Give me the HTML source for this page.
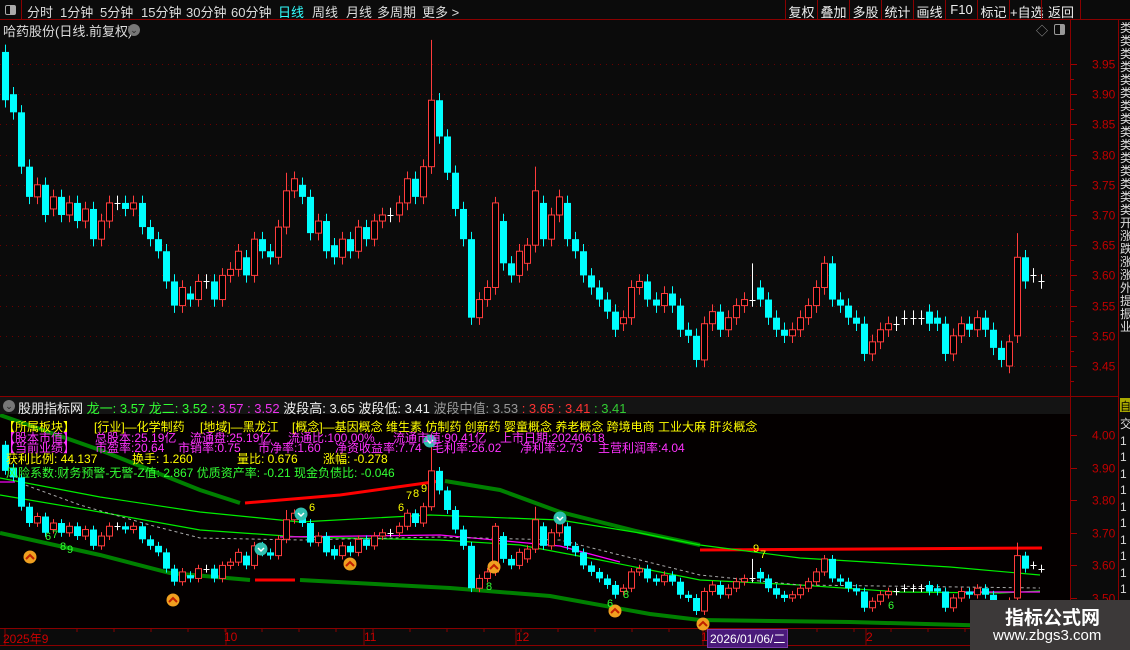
<!DOCTYPE html>
<html><head><meta charset="utf-8"><style>
*{margin:0;padding:0;box-sizing:border-box}
body{width:1130px;height:650px;background:#0b0b0b;overflow:hidden;position:relative;font-family:"Liberation Sans","Noto Sans CJK SC",sans-serif;color:#ddd}
.abs{position:absolute;white-space:nowrap}
.tb{top:0;left:0;width:1130px;height:20px;border-bottom:1px solid #8a0000;font-size:13px}
.tb span{position:absolute;top:2px}
.btn{position:absolute;top:0;height:20px;border-left:1px solid #8a0000;font-size:13px;padding:2px 0;text-align:center;color:#eee}
.row{position:absolute;height:13px;font-size:12px;line-height:13px}
.row span{position:absolute;top:0;white-space:nowrap}
</style></head><body>
<div class="abs tb">
<div class="abs" style="left:0;top:0;width:22px;height:20px;border-right:1px solid #8a0000"><div class="abs" style="left:5px;top:5px;width:11px;height:10px;border:1px solid #aaa;border-radius:2px"><div class="abs" style="right:0;top:0;width:5px;height:8px;background:#aaa"></div></div></div>
<span style="left:27px">分时</span><span style="left:60px">1分钟</span><span style="left:100px">5分钟</span><span style="left:141px">15分钟</span><span style="left:186px">30分钟</span><span style="left:231px">60分钟</span><span style="left:278px;color:#3ff">日线</span><span style="left:312px">周线</span><span style="left:346px">月线</span><span style="left:377px">多周期</span><span style="left:422px">更多 &gt;</span>
<div class="btn" style="left:785px;width:32px">复权</div><div class="btn" style="left:817px;width:32px">叠加</div><div class="btn" style="left:849px;width:32px">多股</div><div class="btn" style="left:881px;width:32px">统计</div><div class="btn" style="left:913px;width:32px">画线</div><div class="btn" style="left:945px;width:32px">F10</div><div class="btn" style="left:977px;width:32px">标记</div><div class="btn" style="left:1009px;width:32px">+自选</div><div class="btn" style="left:1041px;width:40px;border-right:1px solid #8a0000">返回</div>
</div>
<div class="abs" style="left:3px;top:21px;font-size:13px;color:#ddd">哈药股份(日线.前复权)</div>
<div class="abs" style="left:128px;top:24px;width:12px;height:12px;border-radius:6px;background:#777;color:#222;font-size:9px;text-align:center;line-height:12px">⌄</div>
<div class="abs" style="left:1036px;top:22px;color:#999;font-size:12px">◇</div>
<div class="abs" style="left:1054px;top:24px;width:11px;height:11px;border:1px solid #999;border-radius:2px"><div class="abs" style="right:0;top:0;width:4px;height:9px;background:#999"></div></div>

<svg class="abs" style="left:0;top:0" width="1130" height="650" id="sv">
<rect x="0" y="414" width="1070" height="214" fill="#040000"/>
<g id="grid"></g>
<line x1="1070.5" y1="20" x2="1070.5" y2="646" stroke="#8a0000"/>
<line x1="1118.5" y1="20" x2="1118.5" y2="646" stroke="#8a0000"/>
<line x1="0" y1="396.5" x2="1118" y2="396.5" stroke="#8a0000"/>
<line x1="0" y1="628.5" x2="1130" y2="628.5" stroke="#8a0000"/>
<line x1="0" y1="645.5" x2="1130" y2="645.5" stroke="#8a0000"/>
<g id="lines" fill="none"></g>
<g id="c1"></g><g id="c2"></g><g id="marks"></g>
</svg>

<div class="abs" style="left:0;top:397px;width:1070px;height:17px;background:#141414"></div>
<div class="abs" style="left:3px;top:400px;width:12px;height:12px;border-radius:6px;background:#777;color:#222;font-size:9px;text-align:center;line-height:12px">⌄</div>
<div class="abs" style="left:18px;top:398px;font-size:13px"><span style="color:#eee">股朋指标网</span> <span style="color:#3f3">龙一: 3.57 龙二: 3.52</span> <span style="color:#e3e">: 3.57 : 3.52</span> <span style="color:#eee">波段高: 3.65 波段低: 3.41</span> <span style="color:#999">波段中值: 3.53</span> <span style="color:#f33">: 3.65 : 3.41</span> <span style="color:#3c3">: 3.41</span></div>

<div class="row" style="left:0;top:421px;width:1070px;color:#ff0"><span style="left:3px">【所属板块】</span><span style="left:94px">[行业]—化学制药</span><span style="left:200px">[地域]—黑龙江</span><span style="left:292px">[概念]—基因概念 维生素 仿制药 创新药 婴童概念 养老概念 跨境电商 工业大麻 肝炎概念</span></div>
<div class="row" style="left:0;top:432px;width:1070px;color:#f3f"><span style="left:3px">【股本市值】</span><span style="left:95px">总股本:25.19亿</span><span style="left:190px">流通盘:25.19亿</span><span style="left:288px">流通比:100.00%</span><span style="left:393px">流通市值:90.41亿</span><span style="left:500px">上市日期:20240618</span></div>
<div class="row" style="left:0;top:442px;width:1070px;color:#f3f"><span style="left:3px">【当前业绩】</span><span style="left:95px">市盈率:20.64</span><span style="left:178px">市销率:0.75</span><span style="left:258px">市净率:1.60</span><span style="left:335px">净资收益率:7.74</span><span style="left:432px">毛利率:26.02</span><span style="left:520px">净利率:2.73</span><span style="left:598px">主营利润率:4.04</span></div>
<div class="row" style="left:0;top:453px;width:1070px;color:#ff0"><span style="left:6px">获利比例: 44.137</span><span style="left:132px">换手: 1.260</span><span style="left:237px">量比: 0.676</span><span style="left:323px">涨幅: -0.278</span></div>
<div class="row" style="left:0;top:467px;width:1070px;color:#3f3"><span style="left:6px">风险系数:财务预警-无警-Z值: 2.867 优质资产率: -0.21 现金负债比: -0.046</span></div>

<div class="abs" style="left:1120px;top:22px;width:10px;height:370px;overflow:hidden;font-size:12px;line-height:13px;color:#ddd;white-space:normal;word-break:break-all">类类类类类类类类类类类类类类类开涨跌涨涨外提振业</div>
<div class="abs" style="left:1120px;top:398px;width:10px;height:14px;background:#aa0;color:#000;font-size:11px;overflow:hidden">自</div>
<div class="abs" style="left:1120px;top:416px;width:10px;height:212px;overflow:hidden;font-size:12px;line-height:16.5px;color:#ddd;white-space:normal;word-break:break-all">交1111111111111</div>

<div class="abs" style="left:0;top:630px;font-size:12px;color:#c00;width:1070px;height:15px">
<span class="abs" style="left:3px">2025年9</span><span class="abs" style="left:224px">10</span><span class="abs" style="left:364px">11</span><span class="abs" style="left:516px">12</span><span class="abs" style="left:701px">1</span>
<span class="abs" style="left:707px;top:-1px;background:#4a1a7a;color:#fff;padding:0 2px;border:1px solid #7a3aaa">2026/01/06/二</span><span class="abs" style="left:866px">2</span>
</div>
<div class="abs" style="left:970px;top:600px;width:160px;height:50px;background:#3c3939"></div>
<div class="abs" style="left:1005px;top:603px;font-size:19px;font-weight:bold;color:#fff">指标公式网</div>
<div class="abs" style="left:993px;top:627px;font-size:15px;color:#fff">www.zbgs3.com</div>

<script>
var NS="http://www.w3.org/2000/svg";
function el(p,t,a){var e=document.createElementNS(NS,t);for(var k in a)e.setAttribute(k,a[k]);p.appendChild(e);return e;}
var grid=document.getElementById('grid');
function Y1(p){return 64+(3.95-p)*604;}
function Y2(p){return 435+(4.0-p)*326;}
for(var i=0;i<11;i++){var p=3.95-i*0.05,y=Math.round(Y1(p))+.5;
 if(y>25&&y<392){el(grid,'line',{x1:0,y1:y,x2:1066,y2:y,stroke:'#6a0000','stroke-dasharray':'1,5'});
 el(grid,'line',{x1:1071,y1:y,x2:1077,y2:y,stroke:'#a00000'});
 var t=el(grid,'text',{x:1092,y:y+4,fill:'#c00000','font-size':12,'font-family':'Liberation Sans'});t.textContent=p.toFixed(2);}
 var yy=Y1(p)+15;el(grid,'line',{x1:1071,y1:Math.round(yy)+.5,x2:1074,y2:Math.round(yy)+.5,stroke:'#a00000'});}
for(var i=0;i<6;i++){var p=4.0-i*0.1,y=Math.round(Y2(p))+.5;
 el(grid,'line',{x1:1071,y1:y,x2:1077,y2:y,stroke:'#a00000'});
 var t=el(grid,'text',{x:1092,y:y+4,fill:'#c00000','font-size':12,'font-family':'Liberation Sans'});t.textContent=p.toFixed(2);}
[5,226,364,516,703,866].forEach(function(x){el(grid,'line',{x1:x,y1:629,x2:x,y2:645,stroke:'#8a0000'});});
for(var x=40;x<1070;x+=37)el(grid,'line',{x1:x,y1:629,x2:x,y2:632,stroke:'#8a0000'});
var d=[[3.97,3.89],[3.90,3.87],[3.87,3.78],[3.78,3.73],[3.73,3.75],[3.75,3.70],[3.71,3.73],[3.73,3.70],[3.70,3.72],[3.72,3.69],[3.69,3.71],[3.71,3.66],[3.66,3.69],[3.69,3.72],[3.72,3.72],[3.72,3.71],[3.71,3.72],[3.72,3.68],[3.68,3.66],[3.66,3.64],[3.64,3.59],[3.59,3.55],[3.55,3.58],[3.57,3.56],[3.56,3.59],[3.59,3.59],[3.59,3.56],[3.56,3.60],[3.60,3.61],[3.61,3.64],[3.63,3.60],[3.60,3.66],[3.66,3.64],[3.64,3.63],[3.63,3.68],[3.68,3.74],[3.74,3.76],[3.75,3.73],[3.73,3.67],[3.67,3.69],[3.69,3.64],[3.65,3.63],[3.63,3.66],[3.66,3.64],[3.64,3.68],[3.68,3.66],[3.66,3.69],[3.69,3.70],[3.70,3.70],[3.70,3.72],[3.72,3.76],[3.76,3.73],[3.73,3.78],[3.78,3.89],[3.89,3.83],[3.83,3.77],[3.77,3.71],[3.71,3.66],[3.66,3.53],[3.53,3.56],[3.56,3.58],[3.58,3.72],[3.69,3.62],[3.62,3.60],[3.60,3.64],[3.62,3.65],[3.65,3.74],[3.72,3.66],[3.66,3.70],[3.70,3.73],[3.72,3.66],[3.66,3.64],[3.64,3.60],[3.60,3.58],[3.58,3.56],[3.56,3.54],[3.54,3.51],[3.52,3.53],[3.53,3.58],[3.58,3.59],[3.59,3.56],[3.56,3.55],[3.55,3.57],[3.57,3.55],[3.55,3.51],[3.51,3.50],[3.50,3.46],[3.46,3.52],[3.52,3.54],[3.54,3.51],[3.51,3.53],[3.53,3.55],[3.55,3.56],[3.56,3.56],[3.58,3.56],[3.56,3.53],[3.53,3.51],[3.51,3.50],[3.50,3.51],[3.51,3.53],[3.53,3.55],[3.55,3.58],[3.58,3.62],[3.62,3.56],[3.56,3.55],[3.55,3.53],[3.53,3.52],[3.52,3.47],[3.47,3.49],[3.49,3.51],[3.51,3.52],[3.52,3.52],[3.53,3.53],[3.53,3.53],[3.53,3.53],[3.54,3.52],[3.53,3.52],[3.52,3.47],[3.47,3.50],[3.50,3.52],[3.52,3.51],[3.51,3.53],[3.53,3.51],[3.51,3.48],[3.48,3.46],[3.45,3.49],[3.50,3.63],[3.63,3.59],[3.60,3.60],[3.59,3.59]];
var hi={53:3.99,66:3.78,93:3.62,126:3.67,61:3.73,35:3.77};
var n=d.length,step=(1041-5)/(n-1);
function draw(g,Y,w){d.forEach(function(c,i){var x=5+i*step,o=c[0],cl=c[1];var h=hi[i]||Math.max(o,cl)+0.012,l=Math.min(o,cl)-0.012;
 var col=cl>o?'#ff3c3c':(cl<o?'#00ffff':'#ffffff');var xr=Math.round(x)+.5;
 el(g,'line',{x1:xr,y1:Y(h),x2:xr,y2:Y(l),stroke:col});
 var y1=Y(Math.max(o,cl)),y2=Y(Math.min(o,cl));
 if(cl==o){el(g,'line',{x1:xr-3,y1:Math.round(y1)+.5,x2:xr+3,y2:Math.round(y1)+.5,stroke:col});}
 else if(cl>o){el(g,'rect',{x:xr-3,y:y1,width:6,height:Math.max(1,y2-y1),fill:'#000',stroke:col});}
 else{el(g,'rect',{x:xr-3.5,y:y1,width:7,height:Math.max(1,y2-y1),fill:col});}});}
draw(document.getElementById('c1'),Y1);
draw(document.getElementById('c2'),Y2);
var L=document.getElementById('lines');
function pl(pts,col,w,da){var a={points:pts,stroke:col,'stroke-width':w};if(da)a['stroke-dasharray']=da;el(L,'polyline',a);}
pl("0,415 100,450 200,490 240,503",'#008000',4);
pl("245,503 340,495 440,481",'#ff0000',3);
pl("445,481 500,490 560,512 640,532 700,545",'#008000',4);
pl("700,550 1042,548",'#ff0000',3);
pl("0,533 100,555 170,573 250,580",'#008000',4);
pl("255,580 295,580",'#ff0000',3);
pl("300,580 450,588 550,596 650,614 700,620 850,622 1000,626",'#008000',4);
pl("0,478 100,497 200,512 300,522 430,515 560,520 640,533 700,545 800,558 950,567 1040,575",'#00ee00',1.2);
pl("0,495 100,512 200,530 300,537 440,540 520,545 600,560 700,580 800,585 900,592 1000,593 1040,591",'#00ee00',1.2);
pl("0,482 15,482",'#ff00ff',1.2);
pl("280,537 440,535 560,546 620,562",'#ff00ff',1.2);
pl("960,592 1040,592",'#ff00ff',1.2);
pl("20,483 80,505 150,525 200,538 300,540 440,537 560,540 640,560 700,575 800,585 1040,588",'#aaaaaa',1,'3,3');
var M=document.getElementById('marks');
[[30,557],[173,600],[350,564],[494,567],[615,611],[703,624]].forEach(function(p){
 el(M,'circle',{cx:p[0],cy:p[1],r:6.5,fill:'#f0a020'});
 el(M,'path',{d:'M'+(p[0]-4)+' '+(p[1]+2)+'L'+p[0]+' '+(p[1]-2)+'L'+(p[0]+4)+' '+(p[1]+2),stroke:'#c02000','stroke-width':2,fill:'none'});});
[[301,514],[261,549],[560,518],[430,441]].forEach(function(p){el(M,'circle',{cx:p[0],cy:p[1],r:6.5,fill:'#30c0b0'});
 el(M,'path',{d:'M'+(p[0]-3)+' '+(p[1]-1)+'L'+p[0]+' '+(p[1]+2)+'L'+(p[0]+3)+' '+(p[1]-1),stroke:'#fff','stroke-width':1.5,fill:'none'});});
function tx(x,y,s,c){var t=el(M,'text',{x:x,y:y,fill:c,'font-size':11,'font-family':'Liberation Sans'});t.textContent=s;}
tx(45,540,'6','#3f3');tx(52,538,'7','#3f3');tx(60,550,'8','#3f3');tx(67,553,'9','#3f3');
tx(309,511,'6','#ff0');tx(398,511,'6','#ff0');tx(406,499,'7','#ff0');tx(413,497,'8','#ff0');tx(421,492,'9','#ff0');
tx(486,590,'8','#3f3');tx(607,607,'6','#3f3');tx(623,598,'8','#3f3');tx(753,552,'9','#ff0');tx(760,558,'7','#ff0');tx(888,609,'6','#3f3');
</script>
</body></html>
